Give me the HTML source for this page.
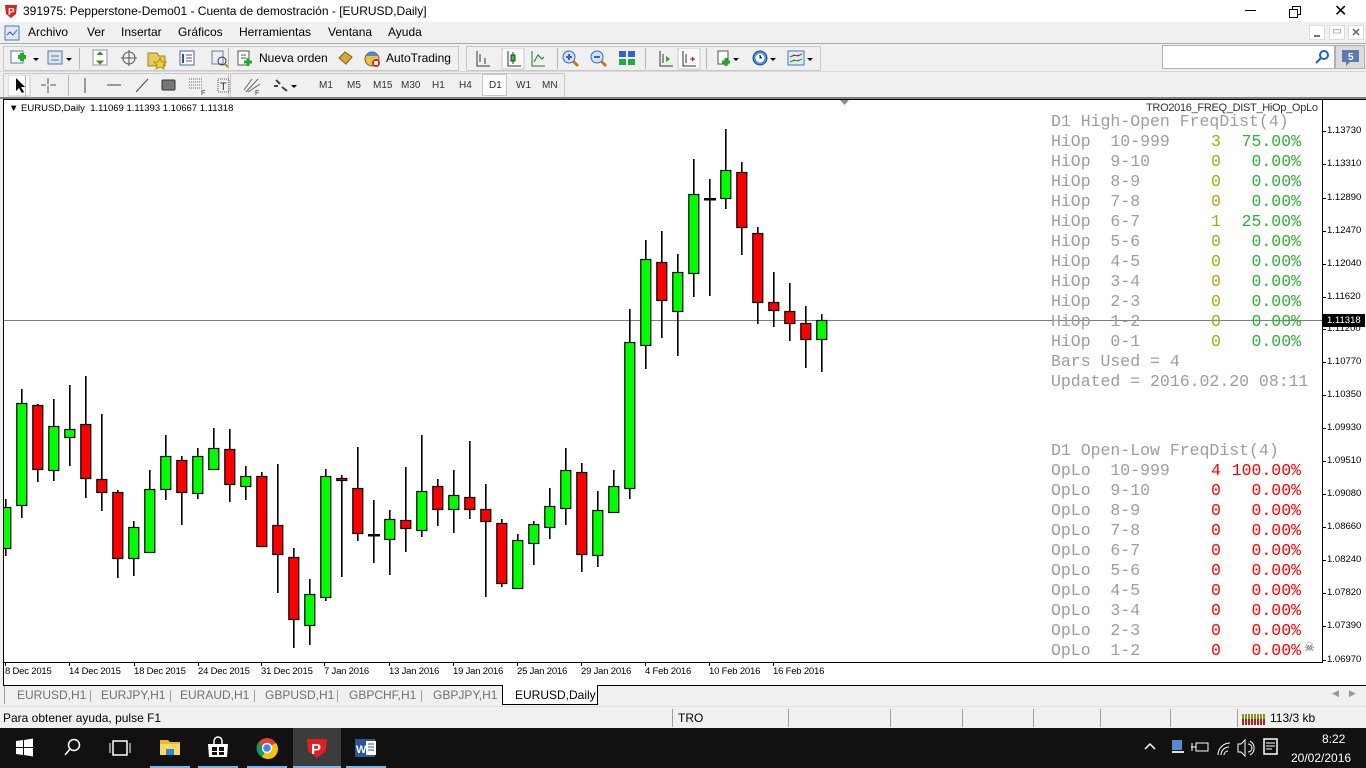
<!DOCTYPE html>
<html><head><meta charset="utf-8">
<style>
*{margin:0;padding:0;box-sizing:border-box}
body{width:1366px;height:768px;overflow:hidden;background:#f0f0f0;font-family:"Liberation Sans",sans-serif;position:relative}
.a{position:absolute;white-space:nowrap}
.t{font-size:12px;color:#000}
.mono{font-family:"Liberation Mono",monospace;font-size:16.5px;line-height:20px;color:#a09c98}
.sep{position:absolute;width:1px;background:#b8b8b8}
.pl{position:absolute;left:1327px;font-size:9.5px;color:#000}
.dl{position:absolute;top:666px;font-size:9.5px;color:#000;letter-spacing:-0.2px}
.tab{position:absolute;top:688px;font-size:12px;color:#707070}
.tsep{position:absolute;top:690px;width:1px;height:12px;background:#a0a0a0}
.ss{position:absolute;top:709px;width:1px;height:18px;background:#a0a0a0}
.tf{position:absolute;top:80px;font-size:10px;color:#333}
</style></head><body>
<!-- title bar -->
<div class="a" style="left:0;top:0;width:1366px;height:22px;background:#fff"></div>
<svg class="a" style="left:3px;top:3px" width="16" height="16"><path d="M2 2h12l-1 9-5 4-5-4z" fill="#e02020"/><text x="5" y="12" font-size="10" fill="#fff" font-family="Liberation Sans" font-weight="bold">P</text></svg>
<div class="a" style="left:23px;top:4px;font-size:12px">391975: Pepperstone-Demo01 - Cuenta de demostración - [EURUSD,Daily]</div>
<div class="a" style="left:1245px;top:10px;width:11px;height:1px;background:#000"></div>
<div class="a" style="left:1292px;top:6px;width:9px;height:9px;border:1px solid #000"></div>
<div class="a" style="left:1289px;top:9px;width:9px;height:9px;border:1px solid #000;background:#fff"></div>
<div class="a" style="left:1334px;top:1px;font-size:16px">✕</div>
<!-- menu -->
<svg class="a" style="left:4px;top:25px" width="16" height="16"><rect x="1" y="1" width="14" height="14" fill="#dde8f4" stroke="#4a7ab8"/><path d="M3 10l3-3 3 3 4-5" stroke="#3060b0" fill="none"/></svg>
<div class="a t" style="left:28px;top:25px">Archivo</div>
<div class="a t" style="left:87px;top:25px">Ver</div>
<div class="a t" style="left:121px;top:25px">Insertar</div>
<div class="a t" style="left:178px;top:25px">Gráficos</div>
<div class="a t" style="left:239px;top:25px">Herramientas</div>
<div class="a t" style="left:328px;top:25px">Ventana</div>
<div class="a t" style="left:388px;top:25px">Ayuda</div>
<div class="a" style="left:1309px;top:25px;width:16px;height:15px;background:#fff;border:1px solid #ddd"></div><div class="a" style="left:1314px;top:35px;width:6px;height:2px;background:#777"></div>
<div class="a" style="left:1329px;top:25px;width:16px;height:15px;background:#fff;border:1px solid #ddd;font-size:10px;color:#777;text-align:center">▭</div>
<div class="a" style="left:1348px;top:25px;width:16px;height:15px;background:#fff;border:1px solid #ddd;font-size:11px;color:#666;text-align:center;font-weight:bold">✕</div>
<div class="a" style="left:0;top:43px;width:1366px;height:1px;background:#aaa"></div>
<!-- toolbar 1 -->
<div class="a" style="left:3px;top:46px;width:456px;height:25px;border:1px solid #c8c8c8"></div>
<div class="a" style="left:466px;top:46px;width:355px;height:25px;border:1px solid #c8c8c8"></div>
<svg class="a" style="left:8px;top:48px" width="820" height="22" font-family="Liberation Sans">
<rect x="3" y="3" width="12" height="12" fill="#fff" stroke="#5577aa"/><path d="M10 9h8M14 5v8" stroke="#22aa22" stroke-width="4"/><path d="M25 10l3 3 3-3z" fill="#000"/>
<rect x="40" y="3" width="14" height="13" fill="#dde6f0" stroke="#5577aa"/><path d="M43 8h8M43 12h8" stroke="#5577aa"/><path d="M58 10l3 3 3-3z" fill="#000"/>
<rect x="85" y="2" width="14" height="15" fill="#fff" stroke="#8899aa"/><path d="M89 7l3-3 3 3M92 16l-3-3h6z" fill="#c33" stroke="#2a2"/>
<circle cx="121" cy="10" r="6" fill="none" stroke="#555"/><path d="M121 2v16M113 10h16" stroke="#555"/>
<path d="M140 5h9l2 3h6v10h-17z" fill="#e8c860" stroke="#a08020"/><path d="M152 10l2 4 4 0-3 3 1 4-4-2-4 2 1-4-3-3 4 0z" fill="#f0d030" stroke="#b09010"/>
<rect x="172" y="3" width="14" height="14" fill="#fff" stroke="#4466aa"/><path d="M175 6v9" stroke="#2255aa" stroke-width="2"/><path d="M178 7h6M178 10h6M178 13h6" stroke="#556"/>
<rect x="204" y="3" width="11" height="13" fill="#e8eef8" stroke="#778"/><circle cx="214" cy="13" r="4" fill="none" stroke="#335"/><path d="M217 16l3 3" stroke="#cc8800" stroke-width="2"/>
<rect x="230" y="3" width="11" height="14" fill="#fff" stroke="#555"/><path d="M233 7h5M233 10h5" stroke="#555"/><path d="M236 14h8M240 10v8" stroke="#22aa22" stroke-width="3"/>
<text x="251" y="14" font-size="12">Nueva orden</text>
<path d="M331 10l6-6 7 5-6 7z" fill="#d8a838" stroke="#806010"/>
<circle cx="364" cy="11" r="7" fill="#e8c048" stroke="#806010"/><path d="M357 8c3-5 11-5 14 0" fill="#4488dd"/><circle cx="368" cy="15" r="4" fill="#dd2222"/><rect x="366" y="13" width="4" height="4" fill="#fff"/>
<text x="378" y="14" font-size="12">AutoTrading</text>
<path d="M469 3v15h13M472 6v8M477 10v6" stroke="#334" fill="none"/>
<rect x="494" y="0" width="22" height="21" fill="#fbfbfb" stroke="#c8c8c8"/><path d="M500 3v15h13M505 4v12" stroke="#334" fill="none"/><rect x="503" y="7" width="4" height="6" fill="#22cc22" stroke="#333"/>
<path d="M524 3v15h13M526 14l4-7 4 4 2-2" stroke="#227722" fill="none"/>
<circle cx="561" cy="9" r="6" fill="#cfe0f8" stroke="#3366cc"/><path d="M558 9h6M561 6v6" stroke="#3366cc" stroke-width="2"/><path d="M565 13l5 5" stroke="#c08010" stroke-width="3"/>
<circle cx="589" cy="9" r="6" fill="#cfe0f8" stroke="#3366cc"/><path d="M586 9h6" stroke="#3366cc" stroke-width="2"/><path d="M593 13l5 5" stroke="#c08010" stroke-width="3"/>
<rect x="611" y="3" width="7" height="6" fill="#3366cc"/><rect x="620" y="3" width="7" height="6" fill="#3366cc"/><rect x="611" y="11" width="7" height="6" fill="#22aa44"/><rect x="620" y="11" width="7" height="6" fill="#22aa44"/>
<path d="M652 3v15h13M655 6v9" stroke="#334" fill="none"/><path d="M658 8l4 3-4 3z" fill="#22aa22"/>
<rect x="670" y="0" width="22" height="21" fill="#fbfbfb" stroke="#c8c8c8"/><path d="M675 3v15h13M678 6v9" stroke="#334" fill="none"/><path d="M682 11h5M684 9l2 2-2 2" stroke="#cc3322"/>
<rect x="710" y="3" width="10" height="13" fill="#fff" stroke="#555"/><path d="M714 14h8M718 10v8" stroke="#22aa22" stroke-width="3"/><path d="M725 10l3 3 3-3z" fill="#000"/>
<circle cx="752" cy="10" r="7" fill="#4a90e0" stroke="#1a4a90"/><circle cx="752" cy="10" r="4.5" fill="#fff"/><path d="M752 7v3h2" stroke="#333"/><path d="M762 10l3 3 3-3z" fill="#000"/>
<rect x="780" y="3" width="16" height="14" fill="#e0ecf8" stroke="#4477bb"/><path d="M782 9l4-2 4 1 4-2" stroke="#aa3322"/><path d="M782 14l4-2 4 1 4-2" stroke="#22aa22"/><path d="M799 10l3 3 3-3z" fill="#000"/>
</svg>
<div class="sep" style="left:79px;top:48px;height:21px"></div>
<div class="sep" style="left:228px;top:48px;height:21px"></div>
<div class="sep" style="left:557px;top:48px;height:21px"></div>
<div class="sep" style="left:645px;top:48px;height:21px"></div>
<div class="sep" style="left:706px;top:48px;height:21px"></div>
<!-- search -->
<div class="a" style="left:1162px;top:45px;width:173px;height:24px;background:#fff;border:1px solid #b0b0b0"></div>
<svg class="a" style="left:1314px;top:49px" width="16" height="16"><circle cx="10" cy="6" r="4" fill="none" stroke="#2060d0" stroke-width="2"/><path d="M7 9l-5 5" stroke="#2060d0" stroke-width="2"/></svg>
<div class="a" style="left:1335px;top:45px;width:30px;height:24px;background:#dcdcdc;border:1px solid #b0b0b0"></div>
<svg class="a" style="left:1340px;top:48px" width="22" height="20"><path d="M2 2h17v12h-9l-4 4v-4h-4z" fill="#5a7ab0"/><text x="8" y="12" font-size="10" fill="#fff" font-family="Liberation Sans" font-weight="bold">5</text></svg>
<div class="a" style="left:0;top:71px;width:1366px;height:1px;background:#d8d8d8"></div>
<!-- toolbar 2 -->
<div class="a" style="left:3px;top:73px;width:226px;height:25px;border:1px solid #c8c8c8"></div>
<div class="a" style="left:230px;top:73px;width:335px;height:25px;border:1px solid #c8c8c8"></div>
<svg class="a" style="left:8px;top:75px" width="300" height="22">
<rect x="0" y="0" width="22" height="21" fill="#fbfbfb" stroke="#c8c8c8"/><path d="M8 3v13l3-3 3 5 2-1-3-5h4z" fill="#000"/>
<path d="M40 3v15M33 10h15" stroke="#555"/><path d="M38 10h4" stroke="#fff"/>
<path d="M77 3v15" stroke="#444"/><path d="M99 10h14" stroke="#444"/><path d="M128 17l12-13" stroke="#444"/>
<rect x="154" y="5" width="13" height="10" rx="1" fill="#777" stroke="#333"/>
<path d="M181 4h14M181 7h14M181 10h14M181 13h14" stroke="#666" stroke-dasharray="1 1"/><text x="193" y="20" font-size="7" fill="#333">F</text>
<rect x="210" y="4" width="11" height="13" fill="none" stroke="#555" stroke-dasharray="1 1"/><text x="212" y="15" font-size="11" fill="#333" font-family="Liberation Sans">T</text>
<path d="M238 17l12-13M240 17l12-8M236 15l8-11" stroke="#666"/><text x="247" y="20" font-size="7" fill="#333">F</text>
<path d="M268 5l4 4M274 12l5 4M266 11l4 0" stroke="#444" stroke-width="2"/><path d="M283 10l3 3 3-3z" fill="#000"/>
</svg>
<div class="sep" style="left:25px;top:75px;height:21px"></div>
<div class="sep" style="left:68px;top:75px;height:21px"></div>
<div class="tf" style="left:319px">M1</div><div class="tf" style="left:347px">M5</div><div class="tf" style="left:373px">M15</div><div class="tf" style="left:401px">M30</div><div class="tf" style="left:432px">H1</div><div class="tf" style="left:459px">H4</div>
<div class="a" style="left:482px;top:74px;width:25px;height:22px;background:#fbfbfb;border:1px solid #c8c8c8"></div>
<div class="tf" style="left:489px">D1</div><div class="tf" style="left:516px">W1</div><div class="tf" style="left:542px">MN</div>
<div class="a" style="left:0;top:97px;width:1366px;height:2px;background:#808080"></div>
<!-- chart area -->
<div class="a" style="left:3px;top:99px;width:1363px;height:587px;background:#fff;border:1px solid #000;border-right:none"></div>
<div class="a" style="left:4px;top:662px;width:1318px;height:1px;background:#000"></div>
<div class="a" style="left:1322px;top:100px;width:1px;height:563px;background:#000"></div>
<svg class="a" style="left:840px;top:100px" width="10" height="6"><path d="M0 0h9l-4.5 5z" fill="#8090a0"/></svg>
<div class="a" style="left:9px;top:103px;font-size:9.5px">▼ EURUSD,Daily&nbsp; 1.11069 1.11393 1.10667 1.11318</div>
<div class="a" style="left:1146px;top:102px;font-size:11px;color:#333;letter-spacing:-0.3px">TRO2016_FREQ_DIST_HiOp_OpLo</div>
<div class="a" style="left:4px;top:320px;width:1318px;height:1px;background:#708090"></div>
<svg id="ch" class="a" style="left:0;top:0" width="1366" height="768"></svg>
<div class="a" style="left:1323px;top:314px;width:42px;height:13px;background:#000;color:#fff;font-size:9.5px;padding-left:4px;line-height:13px">1.11318</div>
<div id="pl"></div>
<div id="dl"></div>
<!-- text panels -->
<div class="a mono" style="left:1051px;top:112px">D1 High-Open FreqDist(4)</div>
<div id="hp"></div>
<div class="a mono" style="left:1051px;top:352px">Bars Used = 4</div>
<div class="a mono" style="left:1051px;top:372px">Updated = 2016.02.20 08:11</div>
<div class="a mono" style="left:1051px;top:441px">D1 Open-Low FreqDist(4)</div>
<div id="lp"></div>
<div class="a" style="left:1304px;top:640px;font-size:12px;color:#444">☠</div>
<!-- tabs -->
<div class="a" style="left:0;top:686px;width:1366px;height:20px;background:#f0f0f0"></div>
<div class="a" style="left:4px;top:686px;width:1px;height:18px;background:#a0a0a0"></div>
<div class="tab" style="left:17px">EURUSD,H1</div><div class="tsep" style="left:90px"></div>
<div class="tab" style="left:101px">EURJPY,H1</div><div class="tsep" style="left:170px"></div>
<div class="tab" style="left:180px">EURAUD,H1</div><div class="tsep" style="left:254px"></div>
<div class="tab" style="left:265px">GBPUSD,H1</div><div class="tsep" style="left:337px"></div>
<div class="tab" style="left:349px">GBPCHF,H1</div><div class="tsep" style="left:421px"></div>
<div class="tab" style="left:433px">GBPJPY,H1</div>
<div class="a" style="left:502px;top:685px;width:96px;height:20px;background:#fff;border:1px solid #000;border-top:none;font-size:12px;padding:3px 0 0 12px">EURUSD,Daily</div>
<div class="a" style="left:1332px;top:688px;font-size:9px;color:#999">◀&nbsp;&nbsp;&nbsp;&nbsp;▶</div>
<!-- status -->
<div class="a" style="left:0;top:706px;width:1366px;height:22px;background:#f0f0f0;border-top:1px solid #e0e0e0"></div>
<div class="a" style="left:3px;top:711px;font-size:12px">Para obtener ayuda, pulse F1</div>
<div class="ss" style="left:672px"></div><div class="a" style="left:678px;top:711px;font-size:12px">TRO</div>
<div class="ss" style="left:788px"></div><div class="ss" style="left:890px"></div><div class="ss" style="left:962px"></div><div class="ss" style="left:1033px"></div><div class="ss" style="left:1100px"></div><div class="ss" style="left:1170px"></div><div class="ss" style="left:1237px"></div>
<svg class="a" style="left:1241px;top:710px" width="26" height="16"><g stroke-width="2"><path d="M2 4v11M5 4v11M8 4v11M11 4v11M14 4v11M17 4v11M20 4v11M23 4v11" stroke="#7a9a20"/><path d="M2 9v6M5 9v6M8 9v6M11 9v6M14 9v6M17 9v6M20 9v6M23 9v6" stroke="#b02020"/></g></svg>
<div class="a" style="left:1270px;top:711px;font-size:12px">113/3 kb</div>
<!-- taskbar -->
<div class="a" style="left:0;top:728px;width:1366px;height:40px;background:#121110"></div>
<div class="a" style="left:293px;top:728px;width:48px;height:40px;background:#3c3c3c"></div>
<svg class="a" style="left:0;top:728px" width="1366" height="40" font-family="Liberation Sans">
<path d="M16 13l7-1v7h-7zM24 12l9-1.5v8.5h-9zM16 20h7v7l-7-1zM24 20h9v8.5l-9-1.5z" fill="#fff"/>
<circle cx="74" cy="17" r="5.5" fill="none" stroke="#fff" stroke-width="1.5"/><path d="M70 21l-5 6" stroke="#fff" stroke-width="1.5"/>
<rect x="113" y="13" width="14" height="14" fill="none" stroke="#fff" stroke-width="1.5"/><path d="M110 15v10M130 15v10" stroke="#fff"/>
<path d="M160 12h8l2 2h10v13h-20z" fill="#e8b830"/><rect x="160" y="16" width="20" height="11" fill="#f8d868"/><rect x="166" y="21" width="8" height="6" fill="#2a8ad8"/>
<path d="M208 16h20l-1 13h-18z" fill="#fff"/><path d="M214 16v-3a4 4 0 0 1 8 0v3" stroke="#fff" fill="none" stroke-width="1.5"/><rect x="212" y="19" width="5" height="4" fill="#121110"/><rect x="219" y="19" width="5" height="4" fill="#121110"/><rect x="212" y="24" width="5" height="3" fill="#121110"/><rect x="219" y="24" width="5" height="3" fill="#121110"/>
<circle cx="267" cy="20" r="10" fill="#db4437"/><path d="M267 20L276 15A10 10 0 0 1 262 29z" fill="#f4c20d"/><path d="M267 20L262 29A10 10 0 0 1 258 15z" fill="#0f9d58"/><circle cx="267" cy="20" r="4.5" fill="#4285f4" stroke="#fff" stroke-width="1.5"/>
<path d="M307 11h20l-1 12-9 7-9-7z" fill="#e02020"/><text x="311" y="26" font-size="15" font-weight="bold" fill="#fff">P</text>
<rect x="355" y="11" width="20" height="18" fill="#2b5797"/><rect x="366" y="13" width="10" height="14" fill="#fff"/><path d="M368 16h6M368 19h6M368 22h6" stroke="#2b5797"/><text x="356" y="25" font-size="11" font-weight="bold" fill="#fff">W</text>
<rect x="150" y="38" width="40" height="2" fill="#76b9ed"/><rect x="198" y="38" width="40" height="2" fill="#76b9ed"/><rect x="247" y="38" width="40" height="2" fill="#76b9ed"/><rect x="293" y="38" width="48" height="2" fill="#76b9ed"/><rect x="346" y="38" width="40" height="2" fill="#76b9ed"/>
<path d="M1145 21l5-5 5 5" stroke="#fff" fill="none" stroke-width="1.5"/>
<rect x="1172" y="12" width="10" height="10" fill="#5a8ad0"/><path d="M1172 24h12" stroke="#ddd" stroke-width="2"/>
<rect x="1196" y="15" width="12" height="8" fill="none" stroke="#fff"/><path d="M1191 19h5M1192 15v8" stroke="#fff"/>
<path d="M1218 27a12 12 0 0 1 12-12M1221 27a8 8 0 0 1 8-8M1224 27a4 4 0 0 1 4-4" stroke="#fff" fill="none"/>
<path d="M1238 16h3l4-4v16l-4-4h-3z" fill="none" stroke="#fff"/><path d="M1248 16a4 4 0 0 1 0 8M1250 13a8 8 0 0 1 0 14" stroke="#fff" fill="none"/>
<rect x="1264" y="11" width="13" height="15" fill="none" stroke="#fff" stroke-width="1.5"/><path d="M1266 15h9M1266 18h9M1266 21h6" stroke="#fff"/>
<text x="1322" y="15" font-size="12" fill="#fff">8:22</text>
<text x="1291" y="34" font-size="12" fill="#fff">20/02/2016</text>
</svg>
<script>
var C=[[5,1,507,548,499,556],[21,1,403,505,389,518],[37,0,405,469,404,482],[53,1,426,470,399,481],[69,1,429,437,385,466],[85,0,424,478,376,498],[101,0,479,492,414,511],[117,0,492,558,490,578],[133,1,527,558,521,576],[149,1,489,552,470,552],[165,1,456,489,435,500],[181,0,460,492,456,525],[197,1,456,493,448,499],[213,1,448,469,428,469],[229,0,449,484,429,502],[245,1,476,486,466,500],[261,0,476,546,472,546],[277,0,525,554,464,593],[293,0,557,619,548,648],[309,1,594,625,579,645],[325,1,476,597,469,601],[341,0,478,480,475,577],[357,0,488,533,447,541],[373,2,535,535,500,563],[389,1,519,539,510,575],[405,0,520,528,467,552],[421,1,491,530,435,537],[437,0,486,509,479,526],[453,1,495,509,470,533],[469,0,497,509,441,519],[485,0,509,521,484,597],[501,0,523,583,519,587],[517,1,540,588,534,588],[533,1,524,543,521,565],[549,1,506,527,488,539],[565,1,470,508,448,525],[581,0,472,554,463,572],[597,1,510,555,491,567],[613,1,486,512,470,512],[629,1,342,488,309,499],[645,1,259,345,240,369],[661,0,262,300,231,338],[677,1,272,311,254,356],[693,1,194,273,159,297],[709,2,199,199,179,296],[725,1,170,198,129,209],[741,0,172,227,162,255],[757,0,233,302,227,324],[773,0,302,310,272,327],[789,0,311,323,283,341],[805,0,323,339,306,368],[821,1,320,339,314,372]];
var s='';C.forEach(function(c){var x=c[0];s+='<rect x="'+x+'" y="'+c[4]+'" width="1.6" height="'+(c[5]-c[4])+'" fill="#000"/>';
if(c[1]==2)s+='<rect x="'+(x-5)+'" y="'+(c[2]-1)+'" width="12" height="2.5" fill="#000"/>';
else{var y0=Math.max(c[2],100);s+='<rect x="'+(x-4.2)+'" y="'+(y0+.5)+'" width="10" height="'+(c[3]-y0)+'" fill="'+(c[1]?'#00ff00':'#ff0000')+'" stroke="#000" stroke-width="1.2"/>';}});
s='<clipPath id="cp"><rect x="4" y="100" width="1318" height="562"/></clipPath><g clip-path="url(#cp)">'+s+'</g>';
var P=[["1.13730",131],["1.13310",164],["1.12890",198],["1.12470",231],["1.12040",264],["1.11620",297],["1.11200",329],["1.10770",362],["1.10350",395],["1.09930",428],["1.09510",461],["1.09080",494],["1.08660",527],["1.08240",560],["1.07820",593],["1.07390",626],["1.06970",660]];
var h='';P.forEach(function(p){s+='<rect x="1322" y="'+p[1]+'" width="4" height="1" fill="#000"/>';h+='<div class="pl" style="top:'+(p[1]-6)+'px">'+p[0]+'</div>';});
document.getElementById('pl').innerHTML=h;
var D=[["8 Dec 2015",4],["14 Dec 2015",68],["18 Dec 2015",133],["24 Dec 2015",197],["31 Dec 2015",260],["7 Jan 2016",323],["13 Jan 2016",388],["19 Jan 2016",452],["25 Jan 2016",516],["29 Jan 2016",580],["4 Feb 2016",644],["10 Feb 2016",708],["16 Feb 2016",772]];
h='';D.forEach(function(d){s+='<rect x="'+(d[1]+1)+'" y="662" width="1" height="4" fill="#000"/>';h+='<div class="dl" style="left:'+(d[1]+1)+'px">'+d[0]+'</div>';});
document.getElementById('dl').innerHTML=h;
document.getElementById('ch').innerHTML=s;
function rows(id,lab,ranges,cnt,pct,top,cc,pc){var h='';ranges.forEach(function(r,i){var y=top+i*20;h+='<div class="a mono" style="left:1051px;top:'+y+'px">'+lab+'&nbsp;&nbsp;'+r+'</div><div class="a mono" style="left:1211px;top:'+y+'px;color:'+cc+'">'+cnt[i]+'</div><div class="a mono" style="right:65px;top:'+y+'px;color:'+pc+'">'+pct[i]+'</div>';});document.getElementById(id).innerHTML=h;}
rows('hp','HiOp',['10-999','9-10','8-9','7-8','6-7','5-6','4-5','3-4','2-3','1-2','0-1'],['3','0','0','0','1','0','0','0','0','0','0'],['75.00%','0.00%','0.00%','0.00%','25.00%','0.00%','0.00%','0.00%','0.00%','0.00%','0.00%'],132,'#a8a810','#30b030');
rows('lp','OpLo',['10-999','9-10','8-9','7-8','6-7','5-6','4-5','3-4','2-3','1-2'],['4','0','0','0','0','0','0','0','0','0'],['100.00%','0.00%','0.00%','0.00%','0.00%','0.00%','0.00%','0.00%','0.00%','0.00%'],461,'#ff0000','#ff0000');
</script>
</body></html>
